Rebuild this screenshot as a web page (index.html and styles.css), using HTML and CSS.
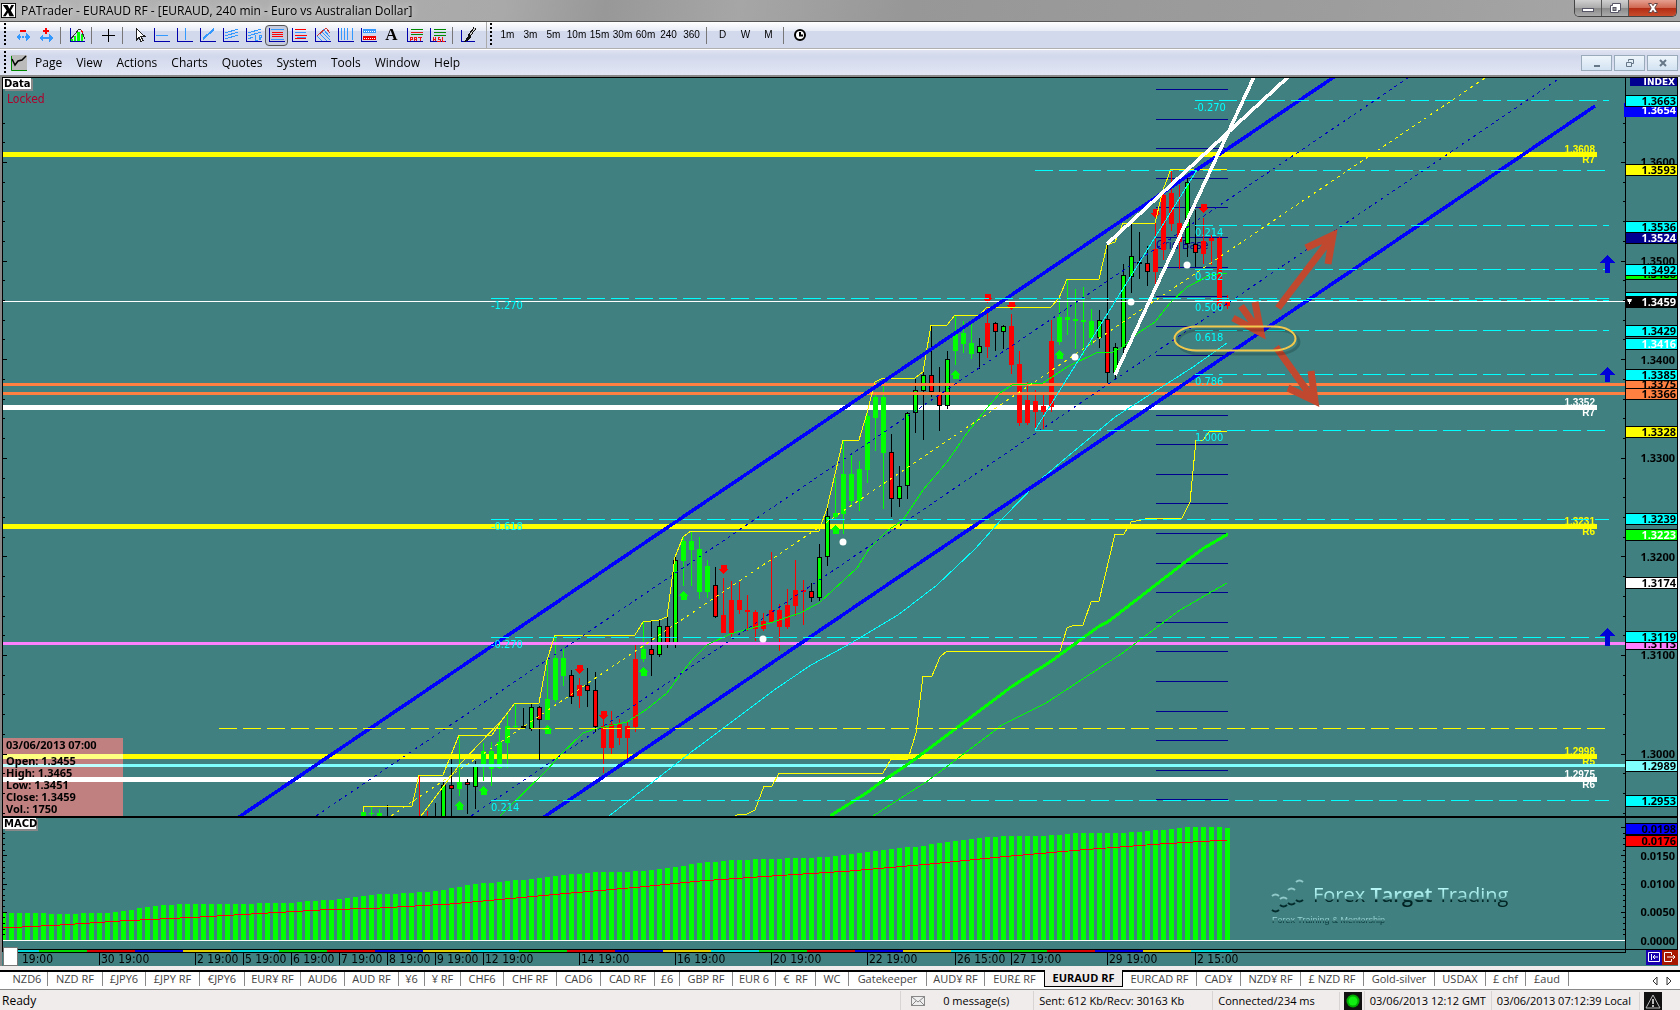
FILE: index.html
```html
<!DOCTYPE html>
<html lang="en">
<head>
<meta charset="utf-8">
<title>PATrader - EURAUD RF</title>
<link rel="stylesheet" href="styles.css">
</head>
<body>
<div class="app">
  <header class="titlebar">
    <svg class="app-icon" viewBox="0 0 16 16"><rect width="16" height="16"/><rect x="1" y="1" width="14" height="14" fill="#fff"/><path d="M2 2h5l2 4 2-4h3l-3.500 6L14 14H9L7.500 10 5 14H2l4-6z"/></svg>
    <h1 class="title">PATrader - EURAUD RF - [EURAUD, 240 min - Euro vs Australian Dollar]</h1>
    <div class="win-controls">
      <button class="win min" aria-label="Minimize"><svg viewBox="0 0 14 12"><rect x="1.500" y="6.500" width="11" height="3" fill="#fff" stroke="#556"/></svg></button>
      <button class="win max" aria-label="Restore"><svg viewBox="0 0 14 12"><path d="M4.500 1.500h8v7h-2v2h-8v-7h2z" fill="#fff" stroke="#556"/><rect x="5" y="5.500" width="3" height="3" fill="#999" stroke="#556"/></svg></button>
      <button class="win close" aria-label="Close"><svg viewBox="0 0 14 12"><path d="M2.500 1.500h3L7 3.700l1.500-2.200h3L8.800 6l2.700 4.500h-3L7 8.300l-1.500 2.200h-3L5.200 6z" fill="#fff" stroke="#644"/></svg></button>
    </div>
  </header>

  <div class="toolbars">
    <div class="toolbar draw" role="toolbar" aria-label="Drawing">
      <button class="tool" aria-label="Compress"><svg viewBox="0 0 16 16"><path d="M5 3h6v2H5z" fill="#f00"/><path d="M1 10l4-4v3h1v2H5v3zM15 10l-4-4v3h-1v2h1v3zM7 9h2v2H7z" fill="#39f"/></svg></button>
      <button class="tool" aria-label="Expand"><svg viewBox="0 0 16 16"><path d="M5 3h2V1h2v2h2v2H9v2H7V5H5z" fill="#f00"/><path d="M1 11l4-4v3h6V7l4 4-4 4v-3H5v3z" fill="#39f"/></svg></button>
      <i class="sep"></i>
      <button class="tool" aria-label="Indicators"><svg viewBox="0 0 16 16"><path d="M2 14v-2h2v2zM5 14V9h2v5zM8 14V5h3v9zM12 14V7h2v7z" fill="#0f0"/><path d="M1 1v13h15" stroke="#00a" fill="none"/><path d="M1 13l6-7 3-4 2 1 4 9" stroke="#333" fill="none"/><path d="M12 3l2 3" stroke="#f00"/></svg></button>
      <i class="sep"></i>
      <button class="tool" aria-label="Crosshair"><svg viewBox="0 0 16 16"><path d="M8.500 2v13M2 8.500h13" stroke="#000"/></svg></button>
      <i class="sep"></i>
      <button class="tool" aria-label="Pointer"><svg viewBox="0 0 16 16"><path d="M5 1.500v12l3-3 2 4 2-1-2-4h4z" fill="#fff" stroke="#222"/></svg></button>
      <button class="tool" aria-label="Horizontal line"><svg viewBox="0 0 16 16"><path d="M.5 1v13.500H16" stroke="#00a" fill="none"/><path d="M2 8.500h12" stroke="#39f"/></svg></button>
      <button class="tool" aria-label="Vertical line"><svg viewBox="0 0 16 16"><path d="M.5 1v13.500H16" stroke="#00a" fill="none"/><path d="M8.500 1v12" stroke="#39f"/></svg></button>
      <button class="tool" aria-label="Trend line"><svg viewBox="0 0 16 16"><path d="M.5 1v13.500H16" stroke="#00a" fill="none"/><path d="M3 12L14 2" stroke="#39f" stroke-width="2"/></svg></button>
      <button class="tool" aria-label="Channel"><svg viewBox="0 0 16 16"><path d="M.5 1v13.500H16" stroke="#00a" fill="none"/><path d="M2 6l13-4M2 9l13-4M2 12l13-4" stroke="#39f"/></svg></button>
      <button class="tool" aria-label="Regression channel"><svg viewBox="0 0 16 16"><path d="M.5 1v13.500H16" stroke="#00a" fill="none"/><path d="M2 6l13-4M2 9l13-4M2 12l5-2M9.500 8v5h2M13.500 13V8.500h2v2h-2l2 3" stroke="#39f" fill="none"/></svg></button>
      <button class="tool pressed" aria-label="Fibonacci retracement" aria-pressed="true"><svg viewBox="0 0 16 16"><path d="M.5 1v13.500H16" stroke="#00a" fill="none"/><path d="M2 2.500h13M2 12.500h13" stroke="#39f"/><path d="M3 5.500h11M3 7.500h11M3 9.500h11" stroke="#f00"/></svg></button>
      <button class="tool" aria-label="Fibonacci extension"><svg viewBox="0 0 16 16"><path d="M.5 1v13.500H16" stroke="#00a" fill="none"/><path d="M3 2.500h11M3 8.500h12M3 11.500h11" stroke="#f00"/><path d="M3 5.500h11M5 10.500h9" stroke="#39f"/></svg></button>
      <button class="tool" aria-label="Fan"><svg viewBox="0 0 16 16"><path d="M.5 1v13.500H16" stroke="#00a" fill="none"/><path d="M2 9l9-8M4 6l8 8M6 4l9 9M8 2l7 8M2 9l5 5" stroke="#39f"/><path d="M2 9l9-8 4 5" stroke="#c33" fill="none"/></svg></button>
      <button class="tool" aria-label="Time zones"><svg viewBox="0 0 16 16"><path d="M.5 1v13.500H16" stroke="#00a" fill="none"/><path d="M3.500 1v12M6.500 1v12M9.500 1v12M14.500 1v12" stroke="#39f"/></svg></button>
      <button class="tool" aria-label="Zones"><svg viewBox="0 0 16 16"><path d="M.5 1v13.500H16" stroke="#00a" fill="none"/><rect x="2" y="2" width="13" height="4" fill="#39f"/><path d="M3 4h1M5 4h1M7 4h1M9 4h1M11 4h1M13 4h1" stroke="#fff"/><rect x="2" y="9" width="13" height="4" fill="#e00"/><path d="M3 11h1M5 11h1M7 11h1M9 11h1M11 11h1M13 11h1" stroke="#fff"/></svg></button>
      <button class="tool letter" aria-label="Text">A</button>
      <button class="tool" aria-label="Pattern"><svg viewBox="0 0 16 16"><path d="M.5 1v13.500H16" stroke="#00a" fill="none"/><path d="M4 2.500h12M4 7.500h12" stroke="#080"/><path d="M4 5.500h12M3 14v-4h2v2H3M7 14v-4h2v4M7 12h2M11 10h4M13 10v4" stroke="#e11" fill="none"/></svg></button>
      <button class="tool" aria-label="High swing"><svg viewBox="0 0 16 16"><path d="M.5 1v13.500H16" stroke="#00a" fill="none"/><path d="M4 2.500h12M4 5.500h12M4 8.500h12" stroke="#080"/><path d="M3 10v4M5 10v4M3 12h2M10 10H8v2h2v2H7M12 10v4h3" stroke="#e11" fill="none"/></svg></button>
      <i class="sep"></i>
      <button class="tool" aria-label="Brush"><svg viewBox="0 0 16 16"><path d="M.5 3v11.500H14" stroke="#00a" fill="none"/><path d="M14 1L8 9" stroke="#111" stroke-width="3"/><path d="M14 1L9 8" stroke="#ccc"/><path d="M8 8l2 2-3 4-4 1 2-3z" fill="#111"/></svg></button>
    </div>
    <div class="toolbar periods" role="toolbar" aria-label="Periods">
      <button class="tool">1m</button><button class="tool">3m</button><button class="tool">5m</button><button class="tool">10m</button><button class="tool">15m</button><button class="tool">30m</button><button class="tool">60m</button><button class="tool">240</button><button class="tool">360</button>
      <i class="sep"></i>
      <button class="tool">D</button><button class="tool">W</button><button class="tool">M</button>
      <i class="sep"></i>
      <button class="tool clock" aria-label="Clock"><svg viewBox="0 0 16 16"><circle cx="8" cy="8" r="5" fill="#fff" stroke="#000" stroke-width="2"/><path d="M8 5v3.500h3" stroke="#000" stroke-width="2" fill="none"/></svg></button>
    </div>
  </div>

  <nav class="menubar" aria-label="Main menu">
    <svg class="menu-icon" viewBox="0 0 16 16"><rect width="16" height="16" fill="#bbb"/><path d="M.5 1v14.500H16" stroke="#080" fill="none"/><path d="M1 4l3 6 3-4 4-1 4-4" stroke="#000" stroke-width="1.500" fill="none"/></svg>
    <button>Page</button><button>View</button><button>Actions</button><button>Charts</button><button>Quotes</button><button>System</button><button>Tools</button><button>Window</button><button>Help</button>
    <div class="mdi-controls">
      <button class="mdi" aria-label="Minimize chart"><svg viewBox="0 0 12 10"><path d="M3 8h6" stroke="#678" stroke-width="2"/></svg></button>
      <button class="mdi" aria-label="Restore chart"><svg viewBox="0 0 12 10"><path d="M4.500 3.500v-2h5v4h-2M2.500 4.500h5v4h-5z" stroke="#678" fill="none"/></svg></button>
      <button class="mdi" aria-label="Close chart"><svg viewBox="0 0 12 10"><path d="M3 2l6 6M9 2L3 8" stroke="#678" stroke-width="2"/></svg></button>
    </div>
  </nav>

  <main class="chart-pane">
    <svg id="chart" class="chart" viewBox="0 77 1680 889" role="img" aria-label="EURAUD 240 minute chart">
      <defs>
        <linearGradient id="sheen" gradientUnits="userSpaceOnUse" x1="0" y1="886" x2="0" y2="906">
          <stop offset="0" stop-color="#c0ffff"/><stop offset=".5" stop-color="#9ce0e0"/><stop offset=".62" stop-color="#7cc0c0"/><stop offset=".7" stop-color="#042c2c"/><stop offset="1" stop-color="#001c1c"/>
        </linearGradient>
        <linearGradient id="sheen-sub" gradientUnits="userSpaceOnUse" x1="0" y1="914" x2="0" y2="926">
          <stop offset="0" stop-color="#a8e8e8"/><stop offset=".45" stop-color="#90cccc"/><stop offset=".65" stop-color="#0c3c3c"/><stop offset="1" stop-color="#0c3c3c"/>
        </linearGradient>
      </defs>
    </svg>
  </main>

  <nav class="tabs" aria-label="Pages">
    <a href="#" class="first">NZD6</a><a href="#">NZD RF</a><a href="#">£JPY6</a><a href="#">£JPY RF</a><a href="#">€JPY6</a><a href="#">EUR¥ RF</a><a href="#">AUD6</a><a href="#">AUD RF</a><a href="#">¥6</a><a href="#">¥ RF</a><a href="#">CHF6</a><a href="#">CHF RF</a><a href="#">CAD6</a><a href="#">CAD RF</a><a href="#">£6</a><a href="#">GBP RF</a><a href="#">EUR 6</a><a href="#">€&nbsp; RF</a><a href="#">WC</a><a href="#">Gatekeeper</a><a href="#">AUD¥ RF</a><a href="#" class="before">EUR£ RF</a><a href="#" class="active" aria-current="page">EURAUD RF</a><a href="#">EURCAD RF</a><a href="#">CAD¥</a><a href="#">NZD¥ RF</a><a href="#">£ NZD RF</a><a href="#">Gold-silver</a><a href="#">USDAX</a><a href="#">£ chf</a><a href="#">£aud</a>
    <div class="tab-scroll">
      <button aria-label="Previous tabs"><svg viewBox="0 0 8 10"><path d="M6 1v8L2 5z" fill="#fff" stroke="#333"/></svg></button>
      <button aria-label="Next tabs"><svg viewBox="0 0 8 10"><path d="M2 1v8l4-4z" fill="#fff" stroke="#333"/></svg></button>
    </div>
  </nav>

  <footer class="status">
    <span class="cell ready">Ready</span>
    <span class="cell mail"><svg viewBox="0 0 14 10"><rect x=".5" y=".5" width="13" height="9" fill="#eee" stroke="#888"/><path d="M1 1l6 5 6-5M1 9l4-4M13 9L9 5" stroke="#888" fill="none"/></svg>0 message(s)</span>
    <span class="cell traffic">Sent: 612 Kb/Recv: 30163 Kb</span>
    <span class="cell link">Connected/234 ms</span>
    <span class="cell icon"><svg viewBox="0 0 18 18"><rect width="18" height="18" fill="#111"/><circle cx="9" cy="9" r="6.500" fill="#0a0"/><circle cx="9" cy="9" r="4.500" fill="#1e1"/></svg></span>
    <span class="cell gmt">03/06/2013 12:12 GMT</span>
    <span class="cell local">03/06/2013 07:12:39 Local</span>
    <span class="cell icon"><svg viewBox="0 0 18 18"><rect width="18" height="18" fill="#111"/><path d="M9 3l7 13H2z" fill="none" stroke="#bbb"/><path d="M9 7v5M9 13v2" stroke="#bbb" stroke-width="2"/></svg></span>
  </footer>
</div>
<script src="chart.js"></script>
</body>
</html>
```
FILE: styles.css
```css
* { box-sizing: border-box; }
body { margin: 0; background: #f0ecec; color: #000; font: 12px/16px "Open Sans", "Noto Sans", sans-serif; }
button { margin: 0; padding: 0; border: 0; background: none; color: inherit; font: inherit; }
.app { display: flex; flex-direction: column; min-height: 100vh; }
svg { display: block; }

.titlebar { display: flex; align-items: flex-start; height: 21px; padding: 0 3px 0 1px; background: linear-gradient(100deg, #b4b4b4 0, #a9a9a9 30%, #989898 36%, #a6a6a6 44%, #979797 54%, #9d9d9d 80%, #a8a8a8 100%); }
.app-icon { width: 15px; height: 15px; margin-top: 3px; }
.title { flex: 1; margin: 0 0 0 5px; font-size: 12px; font-weight: 400; line-height: 21px; text-shadow: 0 0 6px #ddd, 0 0 10px #ddd; }
.win-controls { display: flex; border: 1px solid #444; border-top: 0; border-radius: 0 0 5px 5px; overflow: hidden; }
.win { display: flex; align-items: center; justify-content: center; width: 27px; height: 16px; border-right: 1px solid #555; background: linear-gradient(#d0d0d0, #aaa 50%, #8a8a8a 51%, #aaa); }
.win svg { width: 14px; height: 12px; }
.win.close { width: 47px; border: 0; background: linear-gradient(#e5a090, #cf6650 50%, #b22c14 51%, #c84c2c); }

.toolbars { display: flex; height: 28px; border-top: 1px solid #555; border-bottom: 1px solid #b0b0b0; background: linear-gradient(#fff, #e8ecf6 33%, #d3d9ed 34%, #d3d9ed); }
.toolbar { display: flex; align-items: center; }
.toolbar::before { content: ""; width: 2px; height: 24px; background: repeating-linear-gradient(#000 0, #000 2px, transparent 2px, transparent 4px); }
.draw { width: 487px; padding-left: 4px; border-right: 1px solid #aaa; }
.draw::before { margin-right: 5px; }
.periods { flex: 1; padding-left: 3px; font: 10px/12px "Liberation Sans", sans-serif; }
.periods::before { margin-right: 4px; }
.tool { display: flex; align-items: center; justify-content: center; width: 23px; height: 21px; }
.tool svg { width: 16px; height: 16px; shape-rendering: crispEdges; }
.tool.clock svg { shape-rendering: auto; }
.tool.pressed { border: 1px solid #555; border-radius: 4px; background: #c5cbdc; }
.tool.letter { font: bold 17px/16px "Liberation Serif", serif; border: 0; }
.sep { width: 1px; height: 17px; margin: 0 4px 0 3px; background: #777; }

.menubar { display: flex; align-items: center; height: 28px; padding: 1px 2px 1px 4px; border-top: 1px solid #fff; border-bottom: 2px solid #888; background: linear-gradient(#dfe3f1, #d2d8ec 25%, #e2e6f4); }
.menubar::before { content: ""; width: 2px; height: 24px; margin-right: 5px; background: repeating-linear-gradient(#000 0, #000 2px, transparent 2px, transparent 4px); }
.menu-icon { width: 16px; height: 16px; margin-right: 1px; }
.menubar > button { padding: 0 7px; font-size: 12px; }
.mdi-controls { display: flex; gap: 2px; margin-left: auto; }
.mdi { display: flex; align-items: center; justify-content: center; width: 31px; height: 16px; border: 1px solid #9ab; background: linear-gradient(#eef5fb, #d3e3f2); }
.mdi svg { width: 12px; height: 10px; }

.chart-pane { background: #408080; }
.chart { width: 100%; height: auto; background: #408080; font-family: "DejaVu Sans Condensed", "DejaVu Sans", sans-serif; }
.crisp { shape-rendering: crispEdges; }
.ohlc { fill: #c08080; mix-blend-mode: lighten; }
.t-bold { font: bold 11px "Noto Sans", sans-serif; }
.t-fib { font-size: 11px; fill: #0ff; }
.t-time { font-size: 12px; }
.t-level { font: bold 10px "Liberation Sans", sans-serif; }
.t-tag { font: bold 10px "DejaVu Sans", sans-serif; }
.t-locked { font-size: 12px; fill: #b0002c; }
.t-logo { font: 20px "Open Sans", sans-serif; }
.t-logo-sub { font: 9px "Liberation Sans", sans-serif; }
.t-strong { font-weight: 600; }
.end { text-anchor: end; }

.tabs { display: grid; grid-template-columns: 48px 55px 43px 54px 45px 56px 44px 54px 26px 36px 43px 53px 44px 54px 25px 53px 43px 40px 33px 78px 58px 59px 79px 74px 44px 60px 63px 71px 51px 40px 43px 1fr; height: 22px; margin-top: 2px; border-bottom: 1px solid #888; background: linear-gradient(#f0ecec 2px, #000 2px, #000 4px, #fff 4px); color: #444; padding-top: 4px; white-space: nowrap; font-size: 11px; line-height: 14px; }
.tabs a { height: 14px; border-right: 1px solid #888; color: inherit; text-align: center; text-decoration: none; }
.tabs a.first { padding-left: 7px; }
.tabs a.before { border-right: 0; }
.tabs a.active { height: 17px; margin-top: -2px; padding-top: 1px; border: 1px solid #000; border-top: 0; background: #f0ecec; color: #000; font-weight: 700; }
.tab-scroll { display: flex; justify-content: flex-end; align-items: center; gap: 6px; padding-right: 7px; }
.tab-scroll svg { width: 8px; height: 10px; }

.status { display: flex; flex: 1; align-items: center; min-height: 21px; padding-right: 16px; background: #f0ecec; font-size: 11px; }
.cell { padding: 0 5px; border-left: 1px solid #d8d4d4; white-space: nowrap; line-height: 19px; }
.cell.ready { flex: 1; padding-left: 2px; border: 0; font-size: 12px; }
.cell.mail { display: flex; align-items: center; gap: 18px; padding: 0 24px 0 10px; }
.cell.mail svg { width: 14px; height: 10px; }
.cell.traffic { padding-right: 28px; }
.cell.link { padding-right: 24px; }
.cell.icon { padding: 0 2px 0 4px; }
.cell.icon svg { width: 18px; height: 18px; }
.cell.local { padding-right: 8px; }
```
FILE: chart.js
```javascript
const NS = 'http://www.w3.org/2000/svg';
const chart = document.getElementById('chart');

function el(tag, attrs, text, parent) {
  const node = document.createElementNS(NS, tag);
  for (const key in attrs) node.setAttribute(key, attrs[key]);
  if (text !== undefined && text !== null) node.textContent = text;
  (parent || chart).appendChild(node);
  return node;
}
const rect = (x, y, w, h, fill, extra) => el('rect', { x, y, width: w, height: h, fill, class: 'crisp', ...extra });
const line = (x1, y1, x2, y2, stroke, w = 1, extra) =>
  el('path', { d: `M${x1} ${y1}L${x2} ${y2}`, stroke, 'stroke-width': w, fill: 'none', class: 'crisp', ...extra });
const poly = (pts, stroke, w = 1, extra) =>
  el('polyline', { points: pts, stroke, 'stroke-width': w, fill: 'none', class: 'crisp', ...extra });
const text = (x, y, cls, str, fill, extra) => el('text', { x, y, class: cls, ...(fill ? { fill } : {}), ...extra }, str);

const YELLOW = '#ffff00', CYAN = '#00ffff', GREEN = '#00ff00', RED = '#ff0000', BLUE = '#0000ff', NAVY = '#000090';
const PINK = '#ff80ff', ORANGE = '#ff8040', ICE = '#80ffff', WHITE = '#fff', BLACK = '#000';

// Support and resistance levels
const levels = [
  [154, YELLOW, '1.3608', 'R7'], [407, WHITE, '1.3352', 'R7'], [526, YELLOW, '1.3231', 'R6'],
  [756, YELLOW, '1.2998', 'R5'], [779, WHITE, '1.2975', 'R6'],
];
for (const [y, color, price, name] of levels) {
  text(1595, y - 1, 't-level end', price, color);
  text(1595, y + 9, 't-level end', name, color);
  rect(3, y - 2, 1594, 5, color);
}

// Grid base ladder
for (let k = 0; k < 25; k++) rect(1156, Math.round(89 + k * 29.6), 72, 1, NAVY);
text(1156, 249, 't-time', 'Grid Base', NAVY);

// x, high, open/close top, open/close bottom, low, style
const candles = [
  [363,806,812,817,817,'g'],[371,806,813,814,817,'g'],[379,809,813,817,817,'g'],[387,805,816,817,817,'G'],
  [419,775,816,817,817,'r'],[427,811,816,817,817,'r'],[435,803,816,817,817,'G'],[443,782,785,817,817,'G'],
  [451,759,785,789,816,'R'],[459,735,782,789,796,'g'],[467,779,782,785,814,'R'],[475,761,766,787,809,'G'],
  [483,743,751,764,781,'g'],[491,742,751,769,786,'g'],[499,724,742,768,769,'g'],[507,714,726,743,768,'g'],
  [515,703,726,727,728,'g'],[523,708,726,728,728,'R'],[531,703,707,729,731,'G'],[539,706,707,720,760,'R'],
  [547,660,699,720,720,'g'],[555,635,658,700,702,'g'],[563,649,658,676,686,'g'],[571,670,675,697,704,'R'],
  [579,678,685,696,708,'r'],[587,668,685,691,707,'R'],[595,672,690,727,732,'R'],[603,720,726,748,773,'r'],
  [611,711,724,748,754,'r'],[619,719,724,738,745,'r'],[627,721,726,738,758,'r'],[635,645,659,727,732,'r'],
  [643,622,649,659,662,'g'],[651,620,649,655,676,'R'],[659,620,626,655,657,'G'],[667,617,626,643,648,'R'],
  [675,557,560,643,648,'G'],[683,536,541,561,586,'g'],[691,532,541,550,586,'g'],[699,537,549,592,599,'g'],
  [707,560,566,592,598,'g'],[715,567,585,617,618,'R'],[723,578,615,633,633,'r'],[731,581,600,633,638,'r'],
  [739,582,600,610,614,'r'],[747,595,610,612,631,'r'],[755,610,612,629,641,'r'],[763,613,621,629,631,'r'],
  [771,552,610,622,622,'r'],[779,604,610,627,651,'r'],[787,589,605,627,629,'r'],[795,560,590,606,616,'r'],
  [803,580,590,592,625,'r'],[811,583,591,598,602,'R'],[819,544,557,598,601,'G'],[827,507,516,557,566,'G'],
  [835,477,513,517,519,'g'],[843,440,474,514,534,'g'],[851,455,474,501,507,'g'],[859,461,469,501,511,'g'],
  [867,413,416,470,483,'g'],[875,392,397,418,451,'g'],[883,385,397,453,509,'g'],[891,434,452,499,517,'R'],
  [899,466,486,499,507,'G'],[907,412,413,486,499,'G'],[915,379,390,413,433,'G'],[923,371,375,391,440,'G'],
  [931,325,375,392,397,'R'],[939,367,392,406,431,'R'],[947,351,359,406,409,'G'],[955,316,333,351,365,'g'],
  [963,321,333,344,353,'g'],[971,324,343,354,359,'g'],[979,338,346,353,369,'G'],[987,308,323,347,358,'r'],
  [995,322,323,332,351,'R'],[1003,325,326,332,349,'G'],[1011,314,326,365,374,'r'],[1019,351,364,423,426,'r'],
  [1027,382,400,423,425,'r'],[1035,390,401,412,430,'r'],[1043,393,406,412,429,'r'],[1051,320,341,407,412,'r'],
  [1059,300,317,342,345,'g'],[1067,280,317,320,335,'g'],[1075,289,319,321,349,'g'],[1083,287,320,322,355,'g'],
  [1091,309,321,338,345,'g'],[1099,310,320,338,348,'G'],[1107,245,319,373,383,'R'],[1115,343,347,373,379,'G'],
  [1123,264,275,348,353,'G'],[1131,224,256,277,293,'G'],[1139,232,262,264,279,'R'],[1147,246,263,272,286,'R'],
  [1155,222,249,272,285,'r'],[1163,192,195,250,260,'r'],[1171,171,193,224,231,'r'],[1179,185,223,242,269,'r'],
  [1187,178,182,244,257,'G'],[1195,210,244,253,267,'R'],[1203,218,241,254,264,'r'],[1211,235,238,241,265,'r'],
  [1219,237,238,306,306,'r'],[1227,295,301,306,309,'r'],
];
for (const [x, high, top, bottom, low, style] of candles) {
  const fill = style.toLowerCase() === 'g' ? GREEN : RED;
  const outlined = style === 'G' || style === 'R';
  rect(x, high, 1, low - high, outlined ? BLACK : fill);
  rect(x - 2, top, 5, bottom - top, outlined ? BLACK : fill);
  if (outlined && bottom - top > 2) rect(x - 1, top + 1, 3, bottom - top - 2, fill);
}

// Signal arrows
const up = (x, y) => el('path', { d: `M${x + .5} ${y}l5 5h-2v4h-6v-4h-2z`, fill: GREEN, class: 'crisp' });
const down = (x, y) => el('path', { d: `M${x + .5} ${y + 9}l5-5h-2v-4h-6v4h-2z`, fill: RED, class: 'crisp' });
[[459,801],[483,786],[547,725],[643,667],[683,591],[835,525],[955,370],[1059,350]].forEach(p => up(...p));
[[579,665],[603,711],[723,565],[987,294],[1011,301],[1155,209],[1203,204]].forEach(p => down(...p));

// Full width price lines
line(3, 301.5, 1625, 301.5, WHITE);
[[384,ORANGE],[393,ORANGE],[643,PINK],[765,ICE]].forEach(([y, c]) => rect(3, y - 1, 1622, 3, c));

// Moving averages and stops
poly('609,816 690,753 777,688 811,665 846,646 898,615 937,585 975,549 1001,520 1040,480 1067,457 1115,417 1193,367 1227,343', CYAN);
poly('500,816 548,769 560,755 583,733 595,729 627,722 647,709 667,693 680,675 692,660 707,645 730,634 770,623 800,613 819,603 833,590 857,568 869,549 887,531 903,520 923,490 947,462 967,433 987,408 1000,393 1012,385 1043,383 1067,367 1098,352 1113,352 1123,347 1138,333 1155,322 1170,303 1187,287 1210,275 1227,273', GREEN);
poly('873,816 929,780 1002,725 1046,703 1124,652 1180,610 1227,583', GREEN);
poly('830,816 868,792 877,785 911,762 950,733 1011,687 1050,662 1098,627 1109,621 1184,563 1204,548 1228,534', GREEN, 3);
poly('735,816 739,814 747,814 755,810 764,786 772,786 779,773 883,773 891,759 908,759 916,733 923,676 932,676 940,657 947,651 1060,651 1067,628 1074,625 1083,625 1091,602 1099,601 1115,534 1124,534 1131,522 1150,518 1182,518 1190,502 1196,440 1203,440 1210,431 1227,431', YELLOW);
poly('363,812 363,806 412,806 419,775 443,775 451,755 459,735 492,735 502,720 515,703 539,703 547,660 555,635 635,635 643,622 659,620 667,617 675,557 683,537 691,531 819,531 827,508 843,440 859,440 867,413 875,382 883,378 915,378 923,372 931,325 947,325 955,315 980,315 987,307 1051,307 1059,298 1067,279 1099,279 1107,245 1115,242 1123,223 1155,223 1163,190 1171,169 1227,169', YELLOW);
poly('421,816 452,775 461,763 500,722', YELLOW);

// Regression channel
line(239, 817, 1334, 77, BLUE, 3.5);
line(544, 817, 1595, 106, BLUE, 3.5);
const dots = { 'stroke-dasharray': '3 4' };
line(316, 816, 1408, 78, '#0000c0', 1, dots);
line(391, 816, 1485, 78, YELLOW, 1, dots);
line(471, 816, 1560, 78, '#0000c0', 1, dots);

// Fibonacci levels
const dash = (x, y, end, color = CYAN) => line(x, y + .5, end, y + .5, color, 1, { 'stroke-dasharray': '18 6' });
[[1195,100],[1195,225],[1195,269],[491,298],[1195,300],[1195,330],[1195,374],[491,519],[491,637],[491,800]].forEach(([x, y]) => dash(x, y, 1609));
dash(1035, 170, 1605);
dash(1035, 430, 1605);
dash(219, 728, 1605, YELLOW);
line(1035, 430, 1197, 170, CYAN);
[[1194,111,'-0.270'],[1195,236,'0.214'],[1195,280,'0.382'],[1195,311,'0.500'],[1195,341,'0.618'],[1195,385,'0.786'],[1195,441,'1.000'],
 [491,309,'-1.270'],[491,530,'-0.618'],[491,648,'-0.270'],[491,811,'0.214']].forEach(([x, y, s]) => text(x, y, 't-fib', s));

[[763,639],[843,542],[1075,357],[1131,302],[1187,265]].forEach(([cx, cy]) => el('circle', { cx, cy, r: 3.5, fill: WHITE }));
line(1115, 375, 1254, 77, WHITE, 3.5);
line(1107, 244, 1288, 77, WHITE, 3.5);

// Direction markers at the right edge
[[255,18],[367,15],[628,18]].forEach(([y, h]) => el('path', { d: `M1607 ${y}l8 8h-5v${h - 8}h-5v-${h - 8}h-6z`, fill: '#0000d8', class: 'crisp' }));

// Annotations
const pen = { stroke: '#c0482f', 'stroke-width': 7, fill: 'none', 'stroke-miterlimit': 10 };
el('path', { d: 'M1278 308L1332 237M1306 248L1333 235L1328 264', ...pen });
el('path', { d: 'M1241 306L1259 331M1233 318L1261 333L1255 302', ...pen });
el('path', { d: 'M1276 347L1313 399M1288 388L1315 401L1311 371', ...pen });
el('rect', { x: 1178, y: 330, width: 121, height: 24, rx: 22, ry: 12, fill: 'none', stroke: '#000', 'stroke-opacity': .18, 'stroke-width': 3 });
el('rect', { x: 1174.5, y: 326.5, width: 121, height: 24, rx: 22, ry: 12, fill: 'none', stroke: '#f2c84c', 'stroke-width': 2 });

// Bar summary
rect(3, 738, 120, 78, '#c08080', { class: 'ohlc' });
['03/06/2013 07:00', 'Open: 1.3455', 'High: 1.3465', 'Low: 1.3451', 'Close: 1.3459', 'Vol.: 1750'].forEach((s, i) =>
  text(6, i ? 753 + i * 12 : 749, 't-bold', s));

// MACD pane
const lerp = (pts, x) => {
  for (let i = 1; i < pts.length; i++) if (x <= pts[i][0]) {
    const [a, b] = pts[i - 1], [c, d] = pts[i];
    return b + (d - b) * (x - a) / (c - a);
  }
  return pts[pts.length - 1][1];
};
const macd = [[3,913],[45,913],[50,914],[75,914],[82,913],[107,913],[130,910],[150,906],[163,905],[187,904],[250,904],[258,903],[291,903],[307,901],[340,899],[380,894],[410,893],[435,891],[475,884],[520,880],[563,875],[600,872],[628,872],[668,868],[700,863],[730,860],[772,859],[830,857],[880,850],[920,846],[960,840],[1000,836],[1045,836],[1075,833],[1117,833],[1150,831],[1187,827],[1220,827],[1228,828]];
for (let x = 3; x <= 1228; x += 8) {
  const y = Math.round(lerp(macd, x)), left = Math.max(3, x - 2);
  rect(left, y, x + 3 - left, 940 - y, GREEN);
}
poly('3,928 60,925 120,921 200,917 320,910 380,908 450,904 560,894 640,887 700,881 772,876 850,871 930,864 1000,857 1080,850 1160,844 1227,840', RED);
rect(3, 940, 1622, 1, WHITE);
rect(2, 816, 1676, 2, BLACK);

// Watermark
const logo = text(1313, 902, 't-logo', '', 'url(#sheen)');
[['Forex '], ['Target', true], [' Trading']].forEach(([s, strong]) => el('tspan', strong ? { class: 't-strong' } : {}, s, logo));
text(1272, 923, 't-logo-sub', 'Forex Training & Mentorship', 'url(#sheen-sub)');
[[1272,894,912],[1280,897,907],[1288,888,905],[1296,880,902]].forEach(([x, a, b]) => {
  el('path', { d: `M${x} ${a + 2}q3.500 -3 7 0`, stroke: '#90c8c8', 'stroke-width': 2, fill: 'none' });
  el('path', { d: `M${x} ${b - 2}q3.500 3 7 0`, stroke: '#042c2c', 'stroke-width': 2, fill: 'none' });
});

// Frames and axes
rect(0, 77, 2, 889, '#888');
rect(2, 77, 1, 875, BLACK);
rect(2, 77, 1676, 1, BLACK);
rect(1625, 77, 1, 876, BLACK);
rect(1677, 77, 1, 873, BLACK);
rect(1678, 77, 2, 889, '#e8ecf4');
rect(3, 949, 1675, 1, BLACK);
rect(3, 952, 1623, 1, BLACK);
for (let k = -2; k < 34; k++) {
  const y = Math.round(162 + k * 19.72), w = k % 5 === 0 ? 4 : 2;
  rect(1625 - w, y, w, 1, BLACK);
  rect(3, y, w, 1, BLACK);
}
for (let k = 1; k < 21; k++) {
  const y = Math.round(940 - k * 5.65), w = k % 5 === 0 ? 4 : 2;
  rect(1625 - w, y, w, 1, BLACK);
  rect(3, y, w, 1, BLACK);
}
['1.3600', '1.3500', '1.3400', '1.3300', '1.3200', '1.3100', '1.3000'].forEach((s, i) => text(1675, Math.ceil(166 + i * 98.6), 't-bold end', s));
[[860,'0.0150'],[888,'0.0100'],[916,'0.0050'],[945,'0.0000']].forEach(([y, s]) => text(1675, y, 't-bold end', s));

const marks = [
  [81, NAVY, WHITE, 'INDEX'], [110, BLUE, WHITE, '1.3654'], [101, CYAN, BLACK, '1.3663'], [170, YELLOW, BLACK, '1.3593'],
  [227, CYAN, BLACK, '1.3536'], [238, NAVY, WHITE, '1.3524'], [274, GREEN, BLACK, '1.3488'], [270, CYAN, BLACK, '1.3492'],
  [298, CYAN, BLACK, ''], [302, BLACK, WHITE, '1.3459'], [331, CYAN, BLACK, '1.3429'], [344, CYAN, WHITE, '1.3416'],
  [384, ORANGE, BLACK, '1.3375'], [375, CYAN, BLACK, '1.3385'], [394, ORANGE, BLACK, '1.3366'], [432, YELLOW, BLACK, '1.3328'],
  [519, CYAN, BLACK, '1.3239'], [535, GREEN, WHITE, '1.3223'], [583, WHITE, BLACK, '1.3174'], [644, PINK, BLACK, '1.3113'],
  [637, CYAN, BLACK, '1.3119'], [766, ICE, BLACK, '1.2989'], [801, CYAN, BLACK, '1.2953'], [829, BLUE, BLACK, '0.0198'], [841, RED, BLACK, '0.0176'],
];
for (const [y, bg, fg, s] of marks) {
  if (s === 'INDEX') {
    rect(1630, 78, 47, 8, bg);
    text(1675, 85, 't-tag end', s, fg, { style: 'font-size: 9px' });
    continue;
  }
  if (s === '1.3654') rect(1624, 103, 53, 14, bg);
  else rect(1625.5, y - 5.5, 52, 11, bg, { stroke: BLACK });
  text(1676, y + 4, 't-bold end', s, fg);
}
el('path', { d: 'M1627 299h5l-1 3h-1v2h-1v-2h-1z', fill: WHITE });

// Session colours and time axis
const sessions = ['#00d8d8', '#00d800', '#d80000', '#0000e0', '#e0d000'];
rect(17, 950, 22, 2, sessions[0]);
for (let k = 0; k < 25; k++) rect(39 + k * 48, 950, k === 24 ? 41 : 48, 2, sessions[(k + 1) % 5]);
rect(3, 947, 14, 18, WHITE, { stroke: '#777' });
text(22, 963, 't-time', '19:00');
[[99,'30 19:00'],[195,'2 19:00'],[243,'5 19:00'],[291,'6 19:00'],[339,'7 19:00'],[387,'8 19:00'],[435,'9 19:00'],[483,'12 19:00'],
 [579,'14 19:00'],[675,'16 19:00'],[771,'20 19:00'],[867,'22 19:00'],[955,'26 15:00'],[1011,'27 19:00'],[1107,'29 19:00'],[1195,'2 15:00']].forEach(([x, s]) => {
  rect(x, 953, 1, 12, BLACK);
  text(x + 2, 963, 't-time', s);
});
rect(1646, 950, 16, 15, '#1800b0');
rect(1662, 950, 16, 15, '#a81800');
el('path', { d: 'M1648.500 952.500h11v9h-11zM1651.500 954v6M1658 957h-5M1655 955l-2 2 2 2', stroke: WHITE, fill: 'none' });
el('path', { d: 'M1671.500 955v-2.500h-7v9h7V959M1667 957h8M1673 955l2 2-2 2', stroke: WHITE, fill: 'none' });

// Pane tags
const tag = (y, w, s) => {
  rect(5, y + 1, w, 12, '#888');
  rect(3, y, w, 11, WHITE);
  text(4, y + 9, 't-tag', s);
};
tag(78, 28, 'Data');
tag(818, 33, 'MACD');
text(7, 103, 't-locked', 'Locked');
```
